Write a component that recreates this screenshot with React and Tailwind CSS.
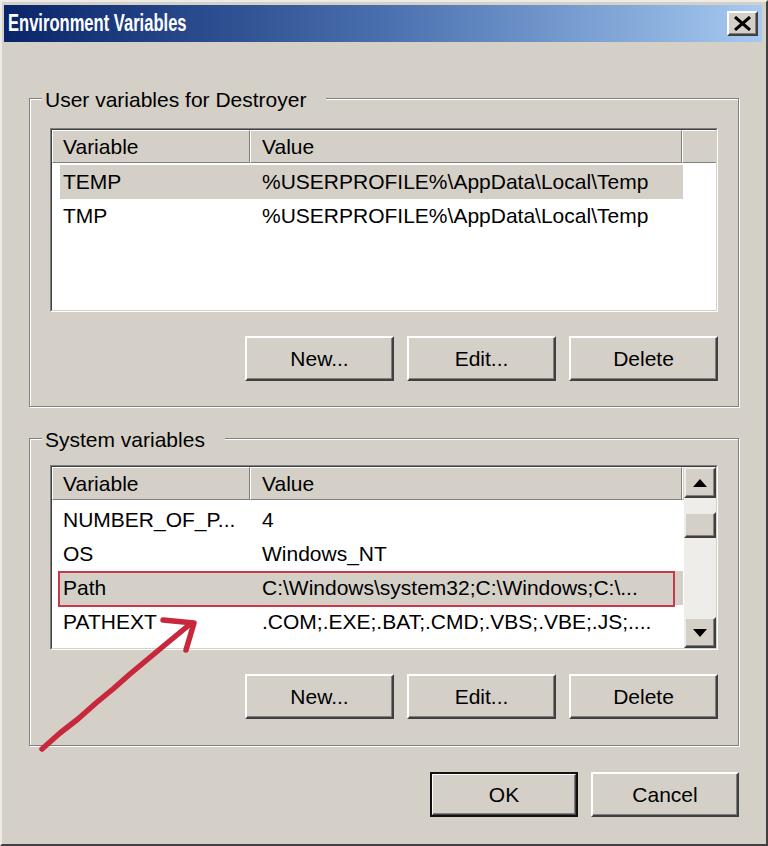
import React from "react";

function Button({ children, className = "" }) {
  return (
    <div
      className={`flex h-[45px] items-center justify-center border-2 border-t-white border-l-white border-r-[#404040] border-b-[#404040] bg-[#d4d0c8] shadow-[inset_-1px_-1px_0_#808080] text-[21px] text-black ${className}`}
    >
      {children}
    </div>
  );
}

function ScrollBtn({ up }) {
  return (
    <div className="flex h-[31px] shrink-0 items-center justify-center border-2 border-t-[#eeede9] border-l-[#eeede9] border-r-[#404040] border-b-[#404040] bg-[#d4d0c8] shadow-[inset_-1px_-1px_0_#808080]">
      <svg width="14" height="8" viewBox="0 0 14 8">
        {up ? <path d="M0 8 L7 0 L14 8 Z" fill="#000" /> : <path d="M0 0 L7 8 L14 0 Z" fill="#000" />}
      </svg>
    </div>
  );
}

function Scrollbar() {
  return (
    <div className="flex w-[32px] shrink-0 flex-col bg-[#eeede9]">
      <ScrollBtn up />
      <div className="h-[14px] shrink-0" />
      <div className="h-[26px] shrink-0 border-2 border-t-[#eeede9] border-l-[#eeede9] border-r-[#404040] border-b-[#404040] bg-[#d4d0c8] shadow-[inset_-1px_-1px_0_#808080]" />
      <div className="flex-1" />
      <ScrollBtn />
    </div>
  );
}

function ListView({ rows, selected, highlight, scroll, heightClass, rowsPad }) {
  return (
    <div className={`${heightClass} border border-t-[#808080] border-l-[#808080] border-r-white border-b-white`}>
      <div className="flex h-full border border-t-[#404040] border-l-[#404040] border-r-[#d4d0c8] border-b-[#d4d0c8] bg-white">
        <div className="flex min-w-0 flex-1 flex-col">
          <div className="flex h-[33px] shrink-0">
            <div className="flex w-[198px] shrink-0 items-center border border-t-white border-l-white border-r-[#808080] border-b-[#808080] bg-[#d4d0c8] pl-[10px]">
              Variable
            </div>
            <div className="flex w-[432px] shrink-0 items-center border border-t-white border-l-white border-r-[#808080] border-b-[#808080] bg-[#d4d0c8] pl-[11px]">
              Value
            </div>
            <div className="flex-1 border border-t-white border-l-white border-r-[#d4d0c8] border-b-[#808080] bg-[#d4d0c8]" />
          </div>
          <div className={`flex flex-col ${rowsPad}`}>
            {rows.map((r, i) => (
              <div
                key={i}
                className={`relative ml-[8px] flex h-[34px] w-[623px] items-center whitespace-nowrap ${i === selected ? "bg-[#d4d0c8]" : ""}`}
              >
                <div className="w-[190px] shrink-0 pl-[3px]">{r[0]}</div>
                <div className="pl-[12px]">{r[1]}</div>
                {i === highlight && (
                  <div className="pointer-events-none absolute -left-[2px] top-0 -bottom-[2px] right-[8px] border-2 border-[#c63a4b]" />
                )}
              </div>
            ))}
          </div>
        </div>
        {scroll && <Scrollbar />}
      </div>
    </div>
  );
}

function Group({ label, children, className = "" }) {
  return (
    <div
      className={`relative border border-[#808080] shadow-[inset_1px_1px_0_#fff,1px_1px_0_#fff] pl-[20px] pr-[20px] ${className}`}
    >
      <span className="absolute left-[12px] -top-[11px] bg-[#d4d0c8] pl-[3px] pr-[20px] leading-[24px]">{label}</span>
      {children}
    </div>
  );
}

export default function App() {
  const userRows = [
    ["TEMP", "%USERPROFILE%\\AppData\\Local\\Temp"],
    ["TMP", "%USERPROFILE%\\AppData\\Local\\Temp"],
  ];
  const sysRows = [
    ["NUMBER_OF_P...", "4"],
    ["OS", "Windows_NT"],
    ["Path", "C:\\Windows\\system32;C:\\Windows;C:\\..."],
    ["PATHEXT", ".COM;.EXE;.BAT;.CMD;.VBS;.VBE;.JS;...."],
  ];
  return (
    <div className="relative flex h-[846px] w-[768px] flex-col overflow-hidden border-2 border-t-[#ecebe7] border-l-[#ecebe7] border-r-[#404040] border-b-[#404040] bg-[#d4d0c8] pl-[2px] pr-[4px] pt-[3px] font-['Liberation_Sans',Arial,sans-serif] text-[21px] text-black">
      <div className="flex h-[37px] shrink-0 items-center justify-between bg-linear-to-r from-[#0a246a] via-[#4a6fae] to-[#a6caf0] pl-[4px] pr-[4px]">
        <span className="inline-block origin-left scale-x-[0.72] text-[23px] font-bold leading-none text-white">
          Environment Variables
        </span>
        <div className="flex h-[25px] w-[31px] items-center justify-center border-2 border-t-white border-l-white border-r-[#404040] border-b-[#404040] bg-[#d4d0c8] shadow-[inset_-1px_-1px_0_#808080]">
          <svg width="19" height="15" viewBox="0 0 19 15">
            <path d="M2 1 L17 14 M17 1 L2 14" stroke="#000" strokeWidth="3" />
          </svg>
        </div>
      </div>

      <div className="flex flex-col pl-[25px] pr-[23px] pt-[56px]">
        <Group label="User variables for Destroyer" className="pt-[29px] pb-[25px]">
          <ListView rows={userRows} selected={0} highlight={-1} scroll={false} heightClass="h-[184px]" rowsPad="pt-[2px]" />
          <div className="mt-[24px] flex justify-end gap-[13px]">
            <Button className="w-[149px]">New...</Button>
            <Button className="w-[149px]">Edit...</Button>
            <Button className="w-[149px]">Delete</Button>
          </div>
        </Group>

        <Group label="System variables" className="mt-[31px] pt-[26px] pb-[26px]">
          <ListView rows={sysRows} selected={2} highlight={2} scroll heightClass="h-[185px]" rowsPad="pt-[3px]" />
          <div className="mt-[24px] flex justify-end gap-[13px]">
            <Button className="w-[149px]">New...</Button>
            <Button className="w-[149px]">Edit...</Button>
            <Button className="w-[149px]">Delete</Button>
          </div>
        </Group>

        <div className="mt-[26px] flex justify-end gap-[13px]">
          <div className="h-[45px] w-[148px] border-2 border-[#111]">
            <div className="flex h-full items-center justify-center border border-t-white border-l-white border-r-[#404040] border-b-[#404040] bg-[#d4d0c8] shadow-[inset_-1px_-1px_0_#808080]">
              OK
            </div>
          </div>
          <Button className="w-[148px]">Cancel</Button>
        </div>
      </div>

      <svg
        className="pointer-events-none absolute -left-[2px] -top-[2px]"
        width="768"
        height="846"
        viewBox="0 0 768 846"
      >
        <path
          d="M42 749 L60 733 L78 719 L96 703 L113 689 L130 674 L148 659 L166 644 L189 625"
          fill="none"
          stroke="#c8283c"
          strokeWidth="5.5"
          strokeLinecap="round"
          strokeLinejoin="round"
        />
        <path
          d="M163 620 L194 623 L186 650"
          fill="none"
          stroke="#c8283c"
          strokeWidth="5.5"
          strokeLinecap="round"
          strokeLinejoin="round"
        />
      </svg>
    </div>
  );
}
